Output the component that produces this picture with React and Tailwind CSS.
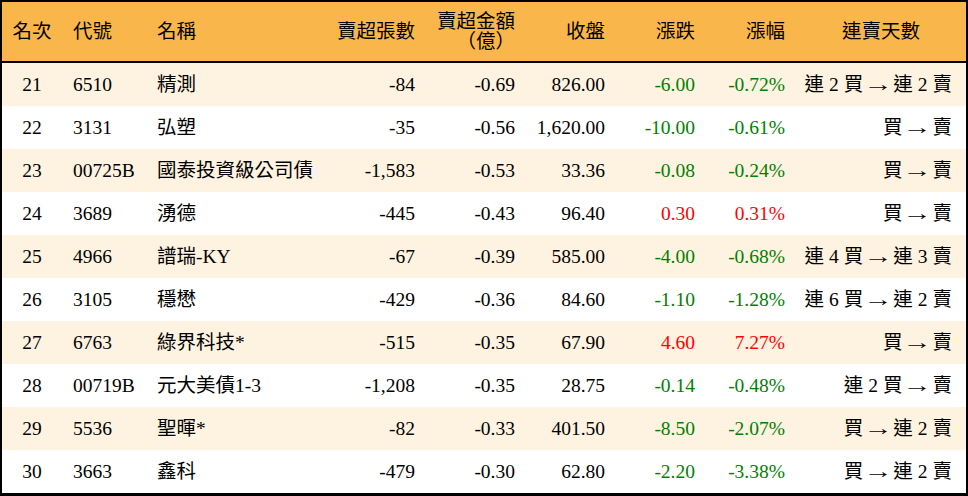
import React from "react";

const rows = [
  ["21", "6510", "精測", "-84", "-0.69", "826.00", "-6.00", "-0.72%", "連 2 買 → 連 2 賣"],
  ["22", "3131", "弘塑", "-35", "-0.56", "1,620.00", "-10.00", "-0.61%", "買 → 賣"],
  ["23", "00725B", "國泰投資級公司債", "-1,583", "-0.53", "33.36", "-0.08", "-0.24%", "買 → 賣"],
  ["24", "3689", "湧德", "-445", "-0.43", "96.40", "0.30", "0.31%", "買 → 賣"],
  ["25", "4966", "譜瑞-KY", "-67", "-0.39", "585.00", "-4.00", "-0.68%", "連 4 買 → 連 3 賣"],
  ["26", "3105", "穩懋", "-429", "-0.36", "84.60", "-1.10", "-1.28%", "連 6 買 → 連 2 賣"],
  ["27", "6763", "綠界科技*", "-515", "-0.35", "67.90", "4.60", "7.27%", "買 → 賣"],
  ["28", "00719B", "元大美債1-3", "-1,208", "-0.35", "28.75", "-0.14", "-0.48%", "連 2 買 → 賣"],
  ["29", "5536", "聖暉*", "-82", "-0.33", "401.50", "-8.50", "-2.07%", "買 → 連 2 賣"],
  ["30", "3663", "鑫科", "-479", "-0.30", "62.80", "-2.20", "-3.38%", "買 → 連 2 賣"],
];

const grid = "grid grid-cols-[60px_84px_180px_100px_100px_90px_90px_90px_170px]";

function Days({ text }) {
  const tokens = text.split(" ");
  return (
    <div className="flex justify-end items-center gap-[5px] pr-[14px] whitespace-nowrap">
      {tokens.map((t, i) =>
        t === "→" ? (
          <span
            key={i}
            className="inline-block w-[20px] text-center scale-x-[1.5]"
            style={{ fontFamily: '"Liberation Serif", serif' }}
          >
            →
          </span>
        ) : (
          <span key={i}>{t}</span>
        )
      )}
    </div>
  );
}

export default function App() {
  return (
    <div
      className="w-[968px] h-[496px] bg-white border-2 border-b-[3px] border-black text-black text-[19.5px] leading-[20px]"
      style={{ fontFamily: '"Liberation Serif", "Noto Sans CJK TC", serif' }}
    >
      <div className={`${grid} h-[61px] bg-[#f9b64a] border-b-2 border-black items-center`}>
        <div className="text-center">名次</div>
        <div className="pl-[11px]">代號</div>
        <div className="pl-[11px]">名稱</div>
        <div className="text-right pr-[11px]">賣超張數</div>
        <div className="text-right pr-[11px] flex flex-col items-end">
          <span>賣超金額</span>
          <span>（億）</span>
        </div>
        <div className="text-right pr-[11px]">收盤</div>
        <div className="text-right pr-[11px]">漲跌</div>
        <div className="text-right pr-[11px]">漲幅</div>
        <div className="text-center">連賣天數</div>
      </div>
      {rows.map((r, i) => {
        const up = !r[6].startsWith("-");
        const color = up ? "text-[#ff0000]" : "text-[#008000]";
        return (
          <div
            key={r[0]}
            className={`${grid} h-[43px] items-center ${i % 2 === 0 ? "bg-[#fef3e0]" : "bg-white"}`}
          >
            <div className="text-center">{r[0]}</div>
            <div className="pl-[11px]">{r[1]}</div>
            <div className="pl-[11px] whitespace-nowrap">{r[2]}</div>
            <div className="text-right pr-[11px]">{r[3]}</div>
            <div className="text-right pr-[11px]">{r[4]}</div>
            <div className="text-right pr-[11px]">{r[5]}</div>
            <div className={`text-right pr-[11px] ${color}`}>{r[6]}</div>
            <div className={`text-right pr-[11px] ${color}`}>{r[7]}</div>
            <Days text={r[8]} />
          </div>
        );
      })}
    </div>
  );
}
